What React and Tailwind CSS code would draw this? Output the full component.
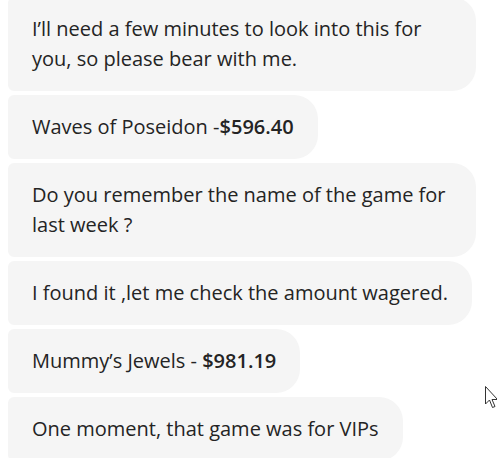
export default function App() {
  const bubble =
    "bg-[#f5f5f5] text-[#242424] rounded-l-[6px] rounded-r-[24px] px-6 py-[17px] max-w-[468px] w-fit";
  return (
    <div className="relative w-[497px] h-[458px] overflow-hidden bg-white">
      <div
        className="flex flex-col gap-1 pl-2 -mt-[3px] text-[20px] leading-[30px]"
        style={{ fontFamily: '"Open Sans", "Noto Sans", sans-serif' }}
      >
        <div className={bubble}>
          I’ll need a few minutes to look into this for you, so please bear with me.
        </div>
        <div className={bubble}>
          Waves of Poseidon -<span className="font-semibold">$596.40</span>
        </div>
        <div className={bubble}>
          Do you remember the name of the game for last week ?
        </div>
        <div className={bubble}>I found it ,let me check the amount wagered.</div>
        <div className={bubble}>
          Mummy’s Jewels - <span className="font-semibold">$981.19</span>
        </div>
        <div className={bubble}>One moment, that game was for VIPs</div>
      </div>
      <svg
        className="absolute left-[485px] top-[386px]"
        width="14"
        height="24"
        viewBox="0 0 14 24"
      >
        <path
          d="M0.5 0.5 L0.5 18 L4.5 14 L7.5 21.5 L10 20.5 L7 13.5 L12.5 13.5 Z"
          fill="white"
          stroke="#333"
          strokeWidth="1"
          strokeLinejoin="miter"
        />
      </svg>
    </div>
  );
}
